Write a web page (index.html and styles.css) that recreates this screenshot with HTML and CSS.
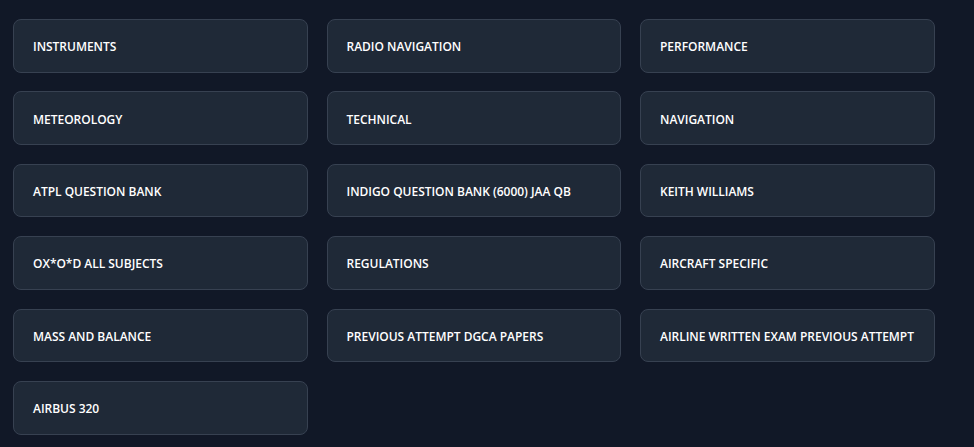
FILE: index.html
```html
<!DOCTYPE html>
<html>
<head>
<meta charset="utf-8">
<link rel="stylesheet" href="styles.css">
</head>
<body>
<div class="grid">
  <div class="card">INSTRUMENTS</div>
  <div class="card">RADIO NAVIGATION</div>
  <div class="card">PERFORMANCE</div>
  <div class="card">METEOROLOGY</div>
  <div class="card">TECHNICAL</div>
  <div class="card">NAVIGATION</div>
  <div class="card">ATPL QUESTION BANK</div>
  <div class="card">INDIGO QUESTION BANK (6000) JAA QB</div>
  <div class="card">KEITH WILLIAMS</div>
  <div class="card">OX*O*D ALL SUBJECTS</div>
  <div class="card">REGULATIONS</div>
  <div class="card">AIRCRAFT SPECIFIC</div>
  <div class="card">MASS AND BALANCE</div>
  <div class="card">PREVIOUS ATTEMPT DGCA PAPERS</div>
  <div class="card">AIRLINE WRITTEN EXAM PREVIOUS ATTEMPT</div>
  <div class="card">AIRBUS 320</div>
</div>
</body>
</html>
```
FILE: styles.css
```css
html, body {
  margin: 0;
  padding: 0;
  background: #111827;
  height: 100%;
  overflow: hidden;
}
.grid {
  display: grid;
  grid-template-columns: repeat(3, 294.5px);
  column-gap: 19px;
  row-gap: 18.8px;
  padding: 19px 0 0 13px;
}
.card {
  box-sizing: border-box;
  height: 53.6px;
  display: flex;
  align-items: center;
  padding: 2px 19px 0;
  background: #1f2937;
  border: 1px solid #374151;
  border-radius: 8px;
  color: #ffffff;
  font-family: "Open Sans", sans-serif;
  font-weight: 600;
  font-size: 12px;
  letter-spacing: -0.02px;
  white-space: nowrap;
}
```
